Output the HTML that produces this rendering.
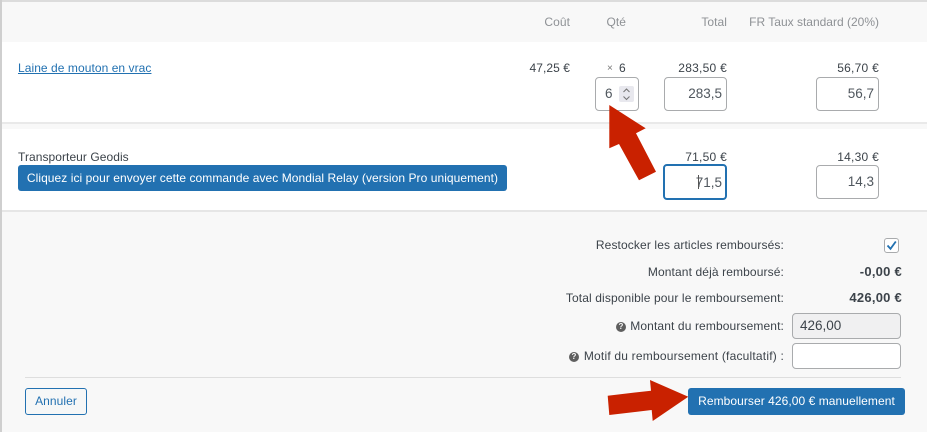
<!DOCTYPE html>
<html><head><meta charset="utf-8">
<style>
html,body{margin:0;padding:0;width:927px;height:432px;overflow:hidden;background:#f8f8f8}
body{position:relative;font-family:"Liberation Sans",sans-serif;font-size:12px;color:#3c434a;letter-spacing:.06px;-webkit-font-smoothing:antialiased}
.a{position:absolute;white-space:nowrap;line-height:16px}
.r{text-align:right}
.f{letter-spacing:.12px}
.v{font-size:13px;font-weight:bold;letter-spacing:.25px}
.p{letter-spacing:.25px}
.b{position:absolute;background:#fff;border:2px solid #c4c4c4;border-radius:4px;box-sizing:border-box}
.i{position:absolute;box-sizing:border-box;background:#fff;border:1.5px solid #a9abad;border-radius:4px;font-size:13.5px;line-height:32px;text-align:right;padding-right:4px;color:#50575e;letter-spacing:0}
.h{color:#8e9195}
.q{position:absolute;width:10px;height:10px;border-radius:50%;background:#5f5f5f;color:#f8f8f8;font-size:8px;font-weight:bold;line-height:10px;text-align:center;letter-spacing:0}
</style></head><body>
<div style="position:absolute;left:0;top:0;width:927px;height:2px;background:#dcdcdc"></div>
<div style="position:absolute;left:0;top:0;width:2px;height:432px;background:#cfcfcf"></div>
<div style="position:absolute;left:2px;top:42px;width:925px;height:80px;background:#fff"></div>
<div style="position:absolute;left:2px;top:122px;width:925px;height:1.5px;background:#e9e9e9"></div>
<div style="position:absolute;left:2px;top:129px;width:925px;height:81px;background:#fff"></div>
<div style="position:absolute;left:2px;top:210px;width:925px;height:1.5px;background:#e6e6e6"></div>

<div class="a r h" style="right:357px;top:14px">Coût</div>
<div class="a r h" style="right:301px;top:14px">Qté</div>
<div class="a r h" style="right:200px;top:14px">Total</div>
<div class="a r h" style="right:48px;top:14px;letter-spacing:0">FR Taux standard (20%)</div>

<div class="a" style="left:18px;top:60px;color:#2271b1;text-decoration:underline">Laine de mouton en vrac</div>
<div class="a r" style="right:357px;top:60px">47,25 €</div>
<div class="a" style="left:607px;top:61px;font-size:10px;color:#777">×</div>
<div class="a" style="left:619px;top:60px">6</div>
<div class="a r p" style="right:200px;top:60px">283,50 €</div>
<div class="a r p" style="right:48px;top:60px">56,70 €</div>

<div class="i" style="left:595px;top:77px;width:44px;height:34px;text-align:left;padding-left:9px">6</div>
<div style="position:absolute;left:619px;top:86px;width:15px;height:16px;background:#e8e8ee;border-radius:2px"></div>
<svg style="position:absolute;left:619px;top:86px" width="15" height="16" viewBox="0 0 15 16"><path d="M4.500 6 L7.500 3 L10.500 6 M4.500 10.500 L7.500 13.500 L10.500 10.500" fill="none" stroke="#777" stroke-width="1.100"/></svg>
<div class="i" style="left:664px;top:77px;width:63px;height:34px">283,5</div>
<div class="i" style="left:816px;top:77px;width:63px;height:34px">56,7</div>

<div class="a" style="left:18px;top:149px">Transporteur Geodis</div>
<div class="a" style="left:18px;top:165px;width:489px;height:26px;line-height:26px;background:#2271b1;border-radius:3px;color:#fff;text-align:center">Cliquez ici pour envoyer cette commande avec Mondial Relay (version Pro uniquement)</div>
<div class="a r p" style="right:200px;top:149px">71,50 €</div>
<div class="a r p" style="right:48px;top:149px">14,30 €</div>
<div class="i" style="left:663px;top:164px;width:64px;height:36px;border:2px solid #2271b1;line-height:33px;padding-right:3px">71,5</div>
<div style="position:absolute;left:698px;top:175px;width:1px;height:14px;background:#555"></div>
<div class="i" style="left:816px;top:165px;width:63px;height:34px">14,3</div>

<div class="a r f" style="right:143px;top:237px">Restocker les articles remboursés:</div>
<div class="b" style="left:884px;top:238px;width:15px;height:15px;border:1.5px solid #a9abad;border-radius:3px"></div>
<svg style="position:absolute;left:884px;top:238px" width="15" height="15" viewBox="0 0 15 15"><path d="M3.500 7.500 L6.500 10.800 L11.800 3.500" fill="none" stroke="#2271b1" stroke-width="1.800"/></svg>
<div class="a r f" style="right:143px;top:264px">Montant déjà remboursé:</div>
<div class="a r v" style="right:25px;top:264px">-0,00 €</div>
<div class="a r f" style="right:143px;top:290px">Total disponible pour le remboursement:</div>
<div class="a r v" style="right:25px;top:290px">426,00 €</div>
<div class="q" style="left:616px;top:322px">?</div>
<div class="a r f" style="right:143px;top:318px">Montant du remboursement:</div>
<div class="i" style="left:792px;top:313px;width:109px;height:26px;background:#f0f0f1;line-height:24px;text-align:left;padding-left:7px;color:#3c434a">426,00</div>
<div class="q" style="left:569px;top:352px">?</div>
<div class="a r" style="right:143px;top:348px;letter-spacing:.2px">Motif du remboursement (facultatif) :</div>
<div class="i" style="left:792px;top:343px;width:109px;height:26px"></div>

<div style="position:absolute;left:25px;top:377px;width:876px;height:1px;background:#dedede"></div>
<div class="a" style="left:25px;top:388px;width:62px;height:27px;box-sizing:border-box;border:1px solid #2271b1;border-radius:3px;color:#2271b1;text-align:center;line-height:25px;background:#f6f7f7">Annuler</div>
<div class="a" style="left:688px;top:388px;width:217px;height:27px;background:#2271b1;border-radius:3px;color:#fff;text-align:center;line-height:27px">Rembourser 426,00 € manuellement</div>

<svg style="position:absolute;left:0;top:0" width="927" height="432" viewBox="0 0 927 432">
<polygon fill="#c92100" points="609.300,105 645.700,128.300 636,133.300 656,171.700 639,180.300 619,144 609.300,148.300"/>
<polygon fill="#c92100" points="607.700,395.700 651,390.700 650,380 688.300,396.700 652.700,421 651.700,410 609.300,415"/>
</svg>
</body></html>
